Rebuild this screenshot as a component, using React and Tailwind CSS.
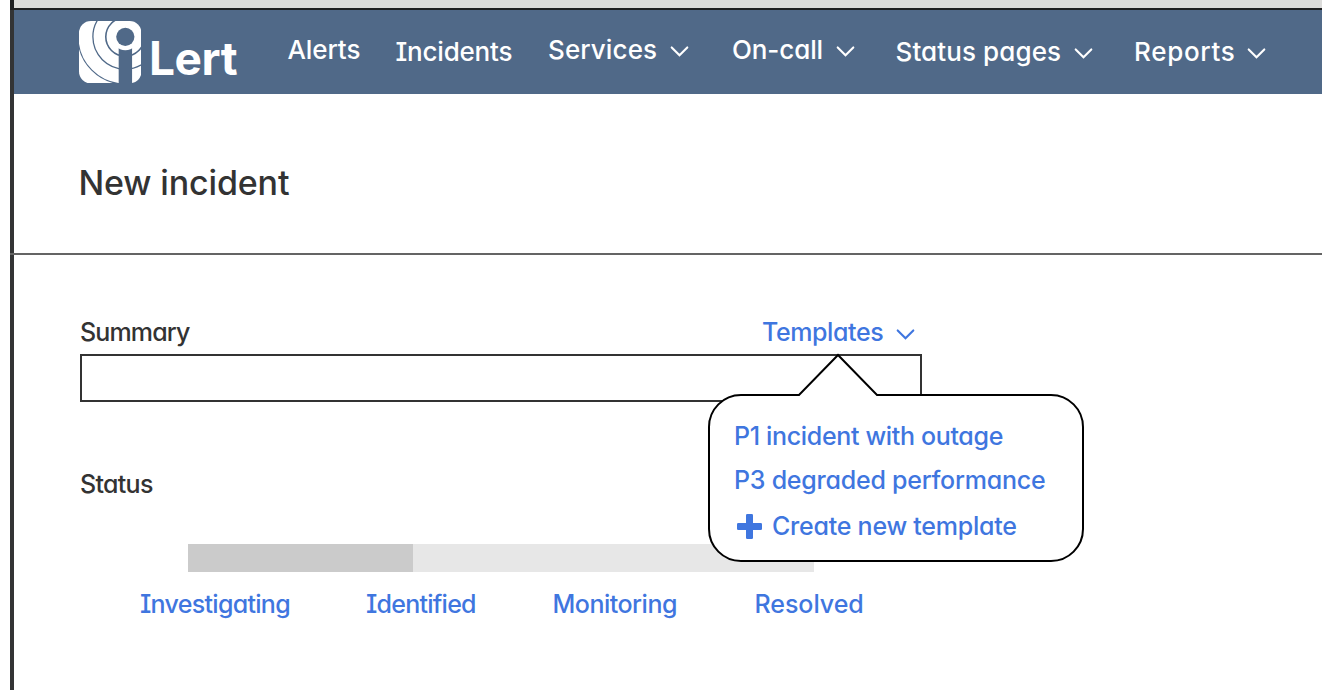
function Chevron({ className }) {
  return (
    <svg className={`h-[14px] w-5 shrink-0 ${className}`} viewBox="0 0 20 14" fill="none" stroke="currentColor" strokeWidth="2.1" strokeLinecap="round">
      <path d="M1.7 3.4 L9.500 11.2 L17.3 3.4" />
    </svg>
  );
}

function Logo() {
  return (
    <svg className="h-[62.5px] w-[62.5px] shrink-0" viewBox="0 0 63 63">
      <defs>
        <clipPath id="tile">
          <rect width="63" height="63" rx="12" />
        </clipPath>
      </defs>
      <g clipPath="url(#tile)">
        <rect width="63" height="63" fill="#fff" />
        <g fill="none" stroke="#506988">
          <circle cx="46.500" cy="16" r="47.5" strokeWidth="1.1" />
          <circle cx="46.500" cy="16" r="32.500" strokeWidth="1.3" />
          <circle cx="46.500" cy="16" r="19.500" strokeWidth="1.6" />
        </g>
        <rect x="40" y="20" width="13.500" height="44" fill="#506988" />
        <circle cx="46.700" cy="16" r="13.500" fill="#fff" />
        <circle cx="46.700" cy="16" r="9.200" fill="#506988" />
      </g>
    </svg>
  );
}

function Plus() {
  return (
    <svg className="mt-1 h-[25px] w-[25px] shrink-0" viewBox="0 0 25 25" fill="#3f76df">
      <rect x="9" width="7" height="25" rx="1.3" />
      <rect y="9" width="25" height="7" rx="1.3" />
    </svg>
  );
}

function NavItem({ className, labelClass, children, menu }) {
  return (
    <a className={`flex items-start ${className}`}>
      <span className={labelClass}>{children}</span>
      {menu && <Chevron className="mt-[10px]" />}
    </a>
  );
}

function TemplateMenu() {
  return (
    <div className="absolute top-[37px] left-[628px] z-10 h-[210px] w-[378px]">
      <svg className="absolute inset-0" width="378" height="210" viewBox="0 0 378 210" fill="#fff" stroke="#000" strokeWidth="2">
        <path d="M33 42 H91 L130 2 L169 42 H343 A32 32 0 0 1 375 74 V176 A32 32 0 0 1 343 208 H33 A32 32 0 0 1 1 176 V74 A32 32 0 0 1 33 42 Z" />
      </svg>
      <ul className="relative flex flex-col pt-[67px] pl-[26px] whitespace-nowrap text-[#3f76df]">
        <li className="tracking-[-0.34px]">P1 incident with outage</li>
        <li className="mt-3 tracking-[-0.24px]">P3 degraded performance</li>
        <li className="mt-[14px] flex items-start gap-[10px] pl-[3px] tracking-[-0.24px]">
          <Plus />
          Create new template
        </li>
      </ul>
    </div>
  );
}

export default function App() {
  return (
    <div className="h-[690px] w-full overflow-hidden bg-white pl-[10px] font-['Inter',sans-serif] text-[25px] leading-8 font-medium text-[#333] [font-feature-settings:'cv11','cv08']">
      <div className="h-[10px] border-b-2 border-l-4 border-[#1f2022] bg-[#dcdcdb]" />
      <div className="h-[680px] border-l-4 border-[#333435]">
        <header className="flex h-[84px] items-start bg-[#506988] text-[26px] whitespace-nowrap text-white">
          <div className="flex w-[273.5px] shrink-0 items-start pt-[10.5px] pl-[64.5px]">
            <Logo />
            <span className="mt-[9px] ml-[8px] text-[46px] leading-[56px] font-bold tracking-[-0.4px]">Lert</span>
          </div>
          <nav className="flex items-start">
            <NavItem className="w-[108px] pt-[24px]" labelClass="tracking-[-0.1px]">Alerts</NavItem>
            <NavItem className="w-[152.5px] pt-[26px]" labelClass="tracking-[-0.2px]">Incidents</NavItem>
            <NavItem className="w-[184px] pt-[24px]" labelClass="w-[121.5px] tracking-[0.1px]" menu>Services</NavItem>
            <NavItem className="w-[163.5px] pt-[24px]" labelClass="w-[103.5px] tracking-[-0.1px]" menu>On-call</NavItem>
            <NavItem className="w-[238.5px] pt-[26px]" labelClass="w-[178px] tracking-[0.1px]" menu>Status pages</NavItem>
            <NavItem className="pt-[26px]" labelClass="w-[113px] tracking-[0.7px]" menu>Reports</NavItem>
          </nav>
        </header>

        <div className="-ml-1 h-[161px] border-b-2 border-[#646464] pt-[69px] pl-[68.5px]">
          <h1 className="text-[34px] leading-10 font-medium tracking-[-0.15px]">New incident</h1>
        </div>

        <main className="pt-[61px] pl-[66px]">
          <section className="relative w-[842px]">
            <div className="flex h-[38px] items-start justify-between">
              <label className="tracking-[-0.85px]">Summary</label>
              <div className="flex w-[160px] items-start text-[#3f76df]">
                <span className="w-[133.5px] tracking-[-0.4px]">Templates</span>
                <Chevron className="mt-[11px]" />
              </div>
            </div>
            <div className="h-12 border-2 border-[#333] bg-white" />
            <TemplateMenu />
          </section>

          <section className="pt-[66px]">
            <h2 className="tracking-[-0.7px]">Status</h2>
            <div className="mt-[44px] ml-[108px] flex h-7 w-[626px] bg-[#e7e7e7]">
              <div className="w-[225.3px] bg-[#cbcbcb]" />
            </div>
            <div className="mt-[16px] ml-[60px] flex whitespace-nowrap text-[#3f76df]">
              <span className="w-[226px] tracking-[-0.7px]">Investigating</span>
              <span className="w-[186.5px] tracking-[-0.75px]">Identified</span>
              <span className="w-[202px] tracking-[-0.5px]">Monitoring</span>
              <span className="tracking-[-0.05px]">Resolved</span>
            </div>
          </section>
        </main>
      </div>
    </div>
  );
}
